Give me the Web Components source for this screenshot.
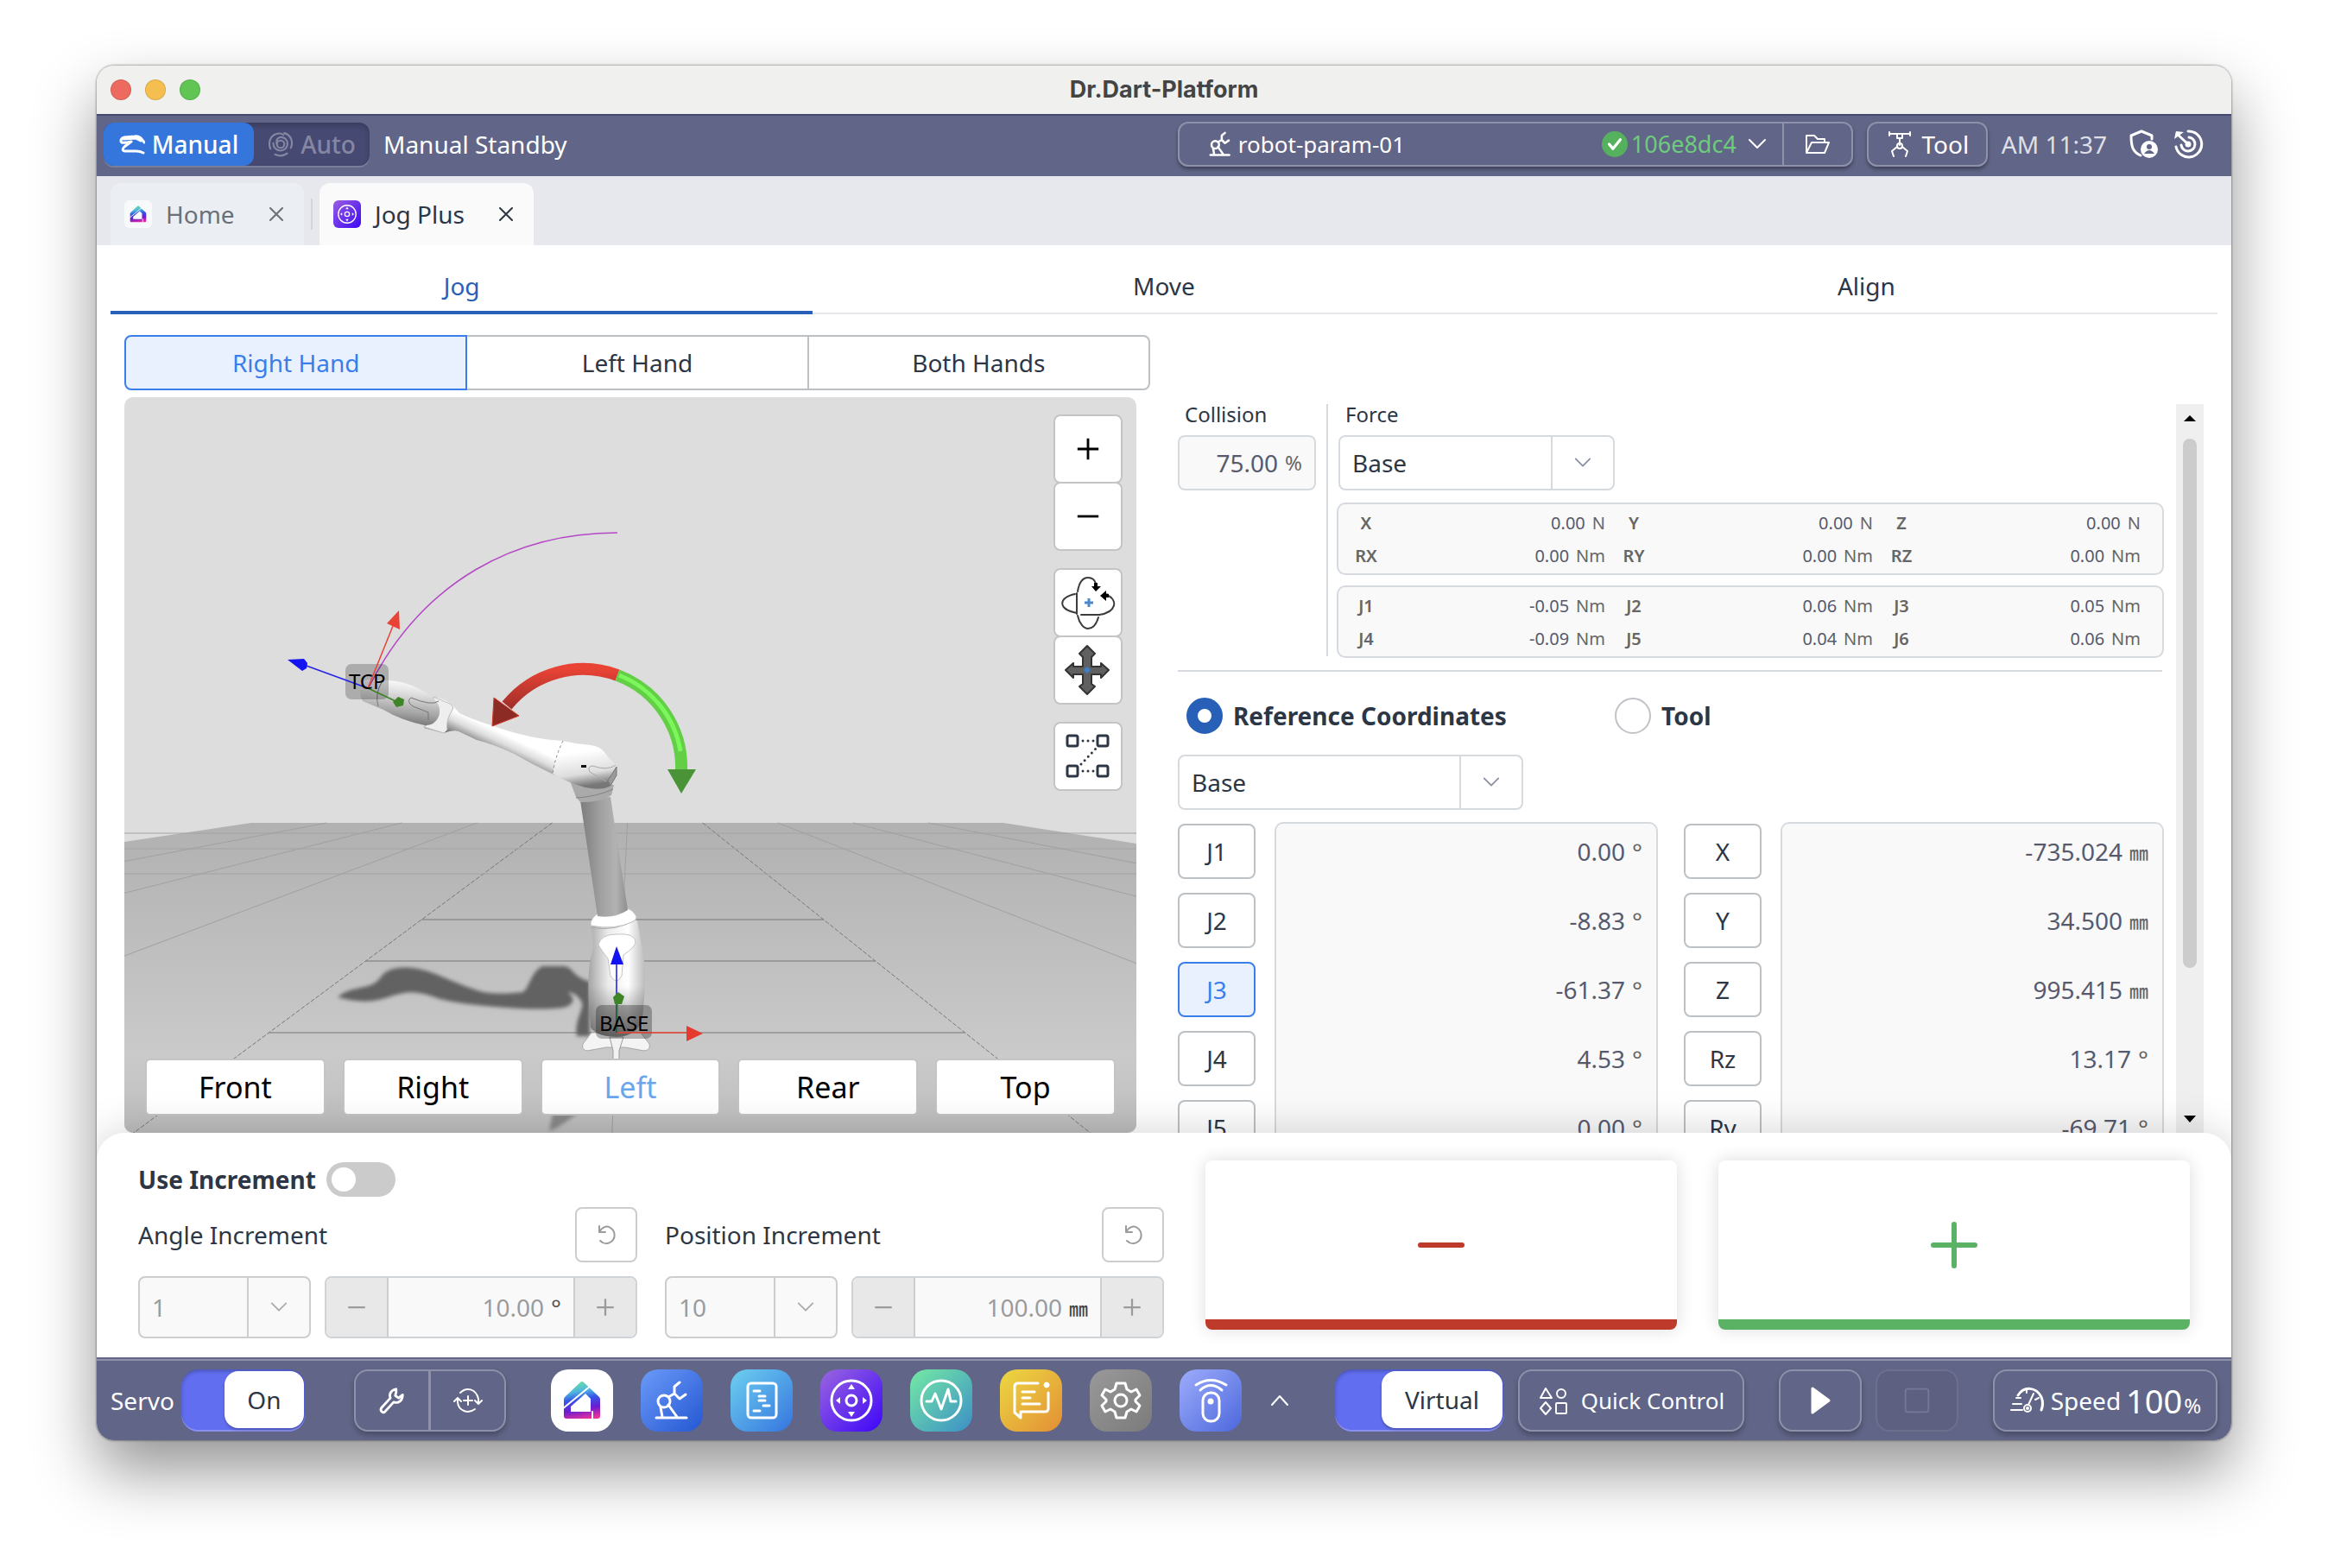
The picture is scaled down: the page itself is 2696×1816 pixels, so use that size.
<!DOCTYPE html>
<html lang="en">
<head>
<meta charset="utf-8">
<title>Dr.Dart-Platform</title>
<style>
  :root {
    --bar: #616587;
    --line: #d6dade;
    --ink: #2d3644;
    --blue: #2860b8;
    --bright: #3a7eea;
    --field: #f9f9f9;
    --glass: #8f91ab;
  }

  body {
    box-sizing: border-box;
    height: 100vh;
    margin: 0;
    padding: 76px 112px 148px;
    background: #fff;
    color: var(--ink);
    font: 28px/40px "Noto Sans", "Noto Sans CJK KR", sans-serif;
    overflow: hidden;
  }
</style>
</head>
<body>
<dart-window>
  <title-bar slot="top">Dr.Dart-Platform</title-bar>
  <status-bar slot="top"></status-bar>
  <module-tabs slot="top"></module-tabs>
  <jog-nav></jog-nav>
  <jog-workspace>
    <hand-switch slot="left"></hand-switch>
    <robot-view slot="left"></robot-view>
    <jog-panel slot="right"></jog-panel>
  </jog-workspace>
  <jog-sheet></jog-sheet>
  <dock-bar></dock-bar>
</dart-window>

<script>
const ROBOT = `
  <path d="M18 56h35M23 44l2 11M32 41l10 14M32 32l7-4v-8l6-5M39 28l6 6 7-5"/>
  <circle cx="27" cy="37" r="7"/>
`;
const JOG = `
  <circle cx="36" cy="36" r="23"/>
  <circle cx="36" cy="36" r="6"/>
  <path fill="currentColor" stroke="none" d="m36 17 4 6h-8zm0 38 4-6h-8zM18 36l5-4v8zm36 0-5-4v8z"/>
`;
const HOUSE = `
  <defs><linearGradient id="g" gradientUnits="userSpaceOnUse" x1="32" y1="14" x2="40" y2="58">
    <stop offset="0" stop-color="#66dfa9"/><stop offset=".25" stop-color="#4fb6dd"/>
    <stop offset=".45" stop-color="#3557ea"/><stop offset=".72" stop-color="#6a1ccf"/>
    <stop offset="1" stop-color="#f0319b"/></linearGradient></defs>
  <path fill="url(#g)" stroke="none" fill-rule="evenodd" d="M34 15q2-2 4 0l18 17q1 1 1 3v19q0 3-3 3H18q-3 0-3-3V35q0-2 1-3zM40 28 23 43v6h23V34z"/>
  <path stroke="#fff" stroke-width="2" d="M46 19 13 46M48 49v10"/>
`;

const ICONS = {
  robot: { box: "15 12 42 48", width: 4, body: ROBOT },
  robotApp: { box: "0 0 72 72", width: 3, body: ROBOT },
  jog: { box: "0 0 72 72", width: 3, body: JOG },
  house: { box: "0 0 72 72", width: 2, body: HOUSE },
  script: { box: "0 0 72 72", width: 3, body: `<rect x="20" y="16" width="33" height="40" rx="4"/><path d="M27 25h7M33 31h7M33 36h7M38 42h7M27 48h7"/>` },
  monitor: { box: "0 0 72 72", width: 3, body: `<circle cx="36" cy="36" r="23"/><path d="M19 37h6l4-9 7 18 8-23 3 14h6"/>` },
  log: { box: "0 0 72 72", width: 3, body: `<path d="M44 16H21q-4 0-4 4v30l7 6v-7h28q4 0 4-4V27"/><circle cx="54" cy="18" r="3" fill="currentColor" stroke-width="1"/><path d="M26 26h14M26 33h9M26 40h20"/>` },
  gear: { box: "0 0 72 72", width: 3, body: `<path d="M31 16h10l2 7 5 3 6-3 4 7-5 5v2l5 5-4 7-6-3-5 3-2 7H31l-2-7-5-3-6 3-4-7 5-5v-2l-5-5 4-7 6 3 5-3z"/><circle cx="36" cy="36" r="7"/>` },
  remote: { box: "0 0 72 72", width: 3, body: `<rect x="27" y="27" width="19" height="33" rx="9"/><circle cx="36" cy="37" r="2" fill="currentColor"/><path d="M24 24q12-11 25 0M19 18q17-11 35 0"/>` },
  hand: { box: "0 0 30 22", width: 3, body: `<path d="M29 9C26 4 23 1 18 2L6 3C2 4 1 7 3 9c3 1 7 0 11-1M5 5l14-1 6 3M14 8 6 14c-3 3-2 5 1 5h13c4 0 6 1 8 2"/>` },
  auto: { box: "0 0 28 28", width: 2, body: `<circle cx="14" cy="14" r="4"/><path d="M10 14C8 6 15 5 19 8c4 4 3 12-5 13-5 0-8-4-8-8M18 2c7 2 10 9 7 16M21 24c-4 3-9 3-13 1M3 19C0 12 3 5 9 3c3-1 6-1 8 1"/>` },
  check: { box: "0 0 28 28", width: 3, body: `<circle cx="14" cy="14" r="14" fill="#56b15f" stroke="none"/><path stroke="#fff" d="m8 14 4 5 8-10"/>` },
  chevron: { box: "0 0 24 24", width: 2, body: `<path d="m3 7 9 9 9-9"/>` },
  up: { box: "0 0 24 24", width: 2, body: `<path d="m3 17 9-10 9 10"/>` },
  folder: { box: "0 0 32 28", width: 2, body: `<path d="M3 24V4h9l4 4h8v4M3 24l6-12h20l-5 12z"/>` },
  gripper: { box: "0 0 28 32", width: 2, body: `<path d="M2 4h24M2 2v4M26 2v4M11 4v5h6V4M14 9v8"/><circle cx="14" cy="18" r="3"/><path d="m11 19-6 5 2 6M17 19l6 5-2 6"/>` },
  shield: { box: "0 0 36 36", width: 3, body: `<path d="M15 31C6 27 4 21 4 8l12-5 12 5v4"/><circle cx="25" cy="24" r="10" fill="currentColor" stroke="none"/><circle cx="25" cy="21" r="3" fill="#616587" stroke="none"/><path stroke="none" fill="#616587" d="M19 29q6-8 12 0z"/>` },
  power: { box: "0 0 36 36", width: 3, body: `<path d="M18 3a15 15 0 1 1-14 18M19 10a8 8 0 1 1-9 9"/><path d="m5 6 13 12"/><path fill="currentColor" stroke="none" d="m2 12 2-9 9 1z"/><circle cx="18" cy="18" r="2" fill="currentColor"/>` },
  close: { box: "0 0 20 20", width: 2, body: `<path d="m3 3 14 14M17 3 3 17"/>` },
  plus: { box: "0 0 32 32", width: 3, body: `<path stroke-linecap="butt" d="M3 16h26M16 3v26"/>` },
  minus: { box: "0 0 32 32", width: 3, body: `<path stroke-linecap="butt" d="M3 16h26"/>` },
  bigPlus: { box: "0 0 60 60", width: 6, body: `<path d="M6 30h48M30 6v48"/>` },
  bigMinus: { box: "0 0 60 60", width: 6, body: `<path d="M6 30h48"/>` },
  undo: { box: "0 0 28 28", width: 2, body: `<path d="M6 4v7h7M6 11C9 5 15 3 19 6c6 4 6 12 1 16-4 3-9 3-13-1"/>` },
  wrench: { box: "0 0 36 36", width: 3, body: `<path d="M23 4c-6 1-9 6-7 11L5 27c-2 3 1 7 4 5l11-12c6 2 11-2 11-9l-5 4-4-3 1-4z"/>` },
  recover: { box: "0 0 36 36", width: 2, body: `<path d="M9 9c7-7 18-5 21 7v6M30 22l-4-4M30 22l4-4M26 28C18 34 7 30 6 20v-5M6 15l-4 4M6 15l4 4M18 13v10M13 18h10"/>` },
  shapes: { box: "0 0 36 36", width: 2, body: `<path d="m9 4 7 11H3zM9 20l6 7-6 7-6-7z"/><circle cx="27" cy="10" r="5"/><rect x="21" y="21" width="12" height="12" rx="1"/>` },
  play: { box: "0 0 36 36", width: 3, body: `<path fill="currentColor" d="M9 4 28 18 9 32z"/>` },
  stop: { box: "0 0 36 36", width: 2, body: `<rect x="3" y="3" width="30" height="30" rx="3"/>` },
  gauge: { box: "0 0 42 32", width: 2, body: `<path stroke-width="3" d="M10 10C17-1 31 0 37 12c2 5 2 10 0 15"/><path d="M20 2v5M34 13l-4 2M22 21l6-13M8 13h5M4 20h10M2 27h13"/><circle cx="21" cy="25" r="4"/><circle cx="21" cy="25" r="1"/>` },
  orbit: { box: "0 0 64 64", width: 2, body: `
    <g stroke="#3c3c3c"><path d="M19 21v24M24 46h21"/>
    <path d="M20 19C22 7 27 3 32 3c5 0 8 3 9 7M20 47c2 9 7 15 12 15 6 0 10-6 12-13M17 22C-3 26-3 40 19 44M45 46c20-3 22-17 9-23"/></g>
    <path fill="#000" stroke="none" d="M36 13h11l-6 6zM39 9h4v5h-4zM46 24l7-6v12zM52 21l4 1v4h-4z"/>
    <path stroke="#4b89cc" stroke-linecap="butt" stroke-width="3" d="M28 32h10M33 27v10"/>` },
  pan: { box: "0 0 64 64", width: 2, body: `
    <path fill="#606060" stroke="#333" d="m31 4 9 9-4 4v11h11v-4l9 8-9 9v-4H36v11l4 3-9 9-9-9 4-3V37H15v4l-9-9 9-8v4h11V17l-4-4z"/>
    <path fill="#3f7fca" stroke="none" d="m31 28 4 4-4 4-4-4z"/>` },
  path: { box: "0 0 56 56", width: 3, body: `
    <rect x="4" y="4" width="12" height="12" rx="2"/><rect x="39" y="4" width="12" height="12" rx="2"/>
    <rect x="4" y="39" width="12" height="12" rx="2"/><rect x="39" y="39" width="12" height="12" rx="2"/>
    <path stroke-dasharray="0 6" d="M22 10h14M22 45h14M20 37l18-19"/>` },
};

// Small base class: every element renders its own styles and markup once.
class DartElement extends HTMLElement {
  connectedCallback() {
    if (this.shadowRoot) return;
    this.attachShadow({ mode: "open" });
    this.shadowRoot.innerHTML = `<style>
      :host { display: block; box-sizing: border-box; }
      *, *::before, *::after { box-sizing: border-box; }
      button, input, select { font: inherit; color: inherit; margin: 0; }
      button { padding: 0; cursor: pointer; }
      ${this.styles()}
    </style>${this.render()}`;
  }

  styles() { return ""; }
  render() { return "<slot></slot>"; }
}

function icon(name, size) {
  return `<ui-icon name="${name}" style="--size: ${size}px"></ui-icon>`;
}

class UiIcon extends DartElement {
  styles() {
    return `
      :host { display: inline-block; width: var(--size, 28px); height: var(--size, 28px); flex: none; }
      svg { display: block; width: 100%; height: 100%; }
    `;
  }
  render() {
    const item = ICONS[this.getAttribute("name")];
    return `<svg viewBox="${item.box}" fill="none" stroke="currentColor" stroke-width="${item.width}"
      stroke-linecap="round" stroke-linejoin="round" aria-hidden="true">${item.body}</svg>`;
  }
}

class DartWindow extends DartElement {
  styles() {
    return `
      :host {
        display: flex;
        flex-direction: column;
        height: 100%;
        border-radius: 20px;
        background: #fff;
        box-shadow: 0 0 2px 1px rgba(0, 0, 0, .3), 0 36px 72px rgba(0, 0, 0, .42);
        overflow: hidden;
      }
    `;
  }
  render() { return `<slot name="top"></slot><slot></slot>`; }
}

class TitleBar extends DartElement {
  styles() {
    return `
      :host {
        display: grid;
        grid-template-columns: 1fr auto 1fr;
        align-items: center;
        flex: none;
        height: 56px;
        padding: 0 16px;
        background: #f0f0ee;
        color: #444;
        font-family: Inter, sans-serif;
        font-size: 27px;
        font-weight: 700;
      }
      .lights { display: flex; gap: 16px; }
      i { width: 24px; height: 24px; border-radius: 50%; background: var(--c); border: 1px solid rgba(0, 0, 0, .12); }
    `;
  }
  render() {
    return `<div class="lights"><i style="--c:#ed6a5e"></i><i style="--c:#f5bf4f"></i><i style="--c:#61c554"></i></div>
      <span><slot></slot></span>`;
  }
}

class StatusBar extends DartElement {
  styles() {
    return `
      :host {
        display: flex;
        justify-content: space-between;
        flex: none;
        height: 72px;
        padding: 8px 32px 12px 8px;
        border-top: 2px solid #454870;
        background: var(--bar);
        color: #fff;
      }
      div { display: flex; align-items: center; }
      .mode {
        height: 50px;
        border-radius: 12px;
        background: #464971;
        box-shadow: 0 2px 0 #7b7e9b, inset 0 3px 6px rgba(0, 0, 0, .2);
      }
      .mode button {
        display: flex;
        align-items: center;
        justify-content: center;
        gap: 8px;
        height: 50px;
        border: 0;
        border-radius: 12px;
        background: none;
        color: #8587a2;
        font-weight: 500;
      }
      .mode .on { width: 174px; background: #3576dd; color: #fff; }
      .mode button + button { width: 134px; }
      .state { margin-left: 16px; }
      .right { gap: 16px; }
      .glass {
        height: 52px;
        border: 2px solid var(--glass);
        border-radius: 12px;
        background: none;
        color: #fff;
        box-shadow: 0 3px 4px rgba(0, 0, 0, .35);
      }
      .param { width: 782px; }
      .param button { border: 0; background: none; color: #fff; height: 48px; display: flex; align-items: center; }
      .pick { flex: 1; padding: 0 17px 0 32px; gap: 6px; font-size: 26px; }
      .pick .hash { display: flex; align-items: center; gap: 4px; margin-left: auto; margin-right: 6px; color: #6dcc7c; font-size: 27px; }
      .param .folder { width: 80px; justify-content: center; border-left: 2px solid var(--glass); }
      .tool { display: flex; align-items: center; justify-content: center; width: 140px; gap: 10px; }
      time { color: #dfe0e7; }
      .end { gap: 16px; margin-left: 8px; }
      .end button { display: flex; border: 0; background: none; color: #fff; }
    `;
  }
  render() {
    return `
      <div>
        <div class="mode">
          <button type="button" class="on" aria-pressed="true">${icon("hand", 30)}Manual</button>
          <button type="button" aria-pressed="false">${icon("auto", 30)}Auto</button>
        </div>
        <span class="state">Manual Standby</span>
      </div>
      <div class="right">
        <div class="glass param">
          <button type="button" class="pick">${icon("robot", 30)}<span>robot-param-01</span>
            <span class="hash">${icon("check", 30)}106e8dc4</span>${icon("chevron", 24)}</button>
          <button type="button" class="folder" aria-label="Open parameters">${icon("folder", 32)}</button>
        </div>
        <button type="button" class="glass tool">${icon("gripper", 32)}Tool</button>
        <time>AM 11:37</time>
        <div class="end">
          <button type="button" aria-label="Safety">${icon("shield", 36)}</button>
          <button type="button" aria-label="Power">${icon("power", 36)}</button>
        </div>
      </div>
    `;
  }
}

class ModuleTabs extends DartElement {
  styles() {
    return `
      :host {
        display: flex;
        align-items: flex-end;
        flex: none;
        height: 80px;
        padding: 0 16px;
        background: #e7e8ed;
      }
      .tab {
        display: flex;
        align-items: center;
        gap: 16px;
        width: 224px;
        height: 72px;
        padding: 0 22px 0 16px;
        border-radius: 12px 12px 0 0;
        background: #ebeef3;
        color: #6b7078;
      }
      .tab.on { width: 248px; background: #fafafa; color: var(--ink); }
      .logo { display: flex; flex: none; border-radius: 6px; background: #f8f9fb; color: #fff; }
      .on .logo { background: linear-gradient(135deg, #9a5fe0, #3d06f5); }
      a { flex: 1; color: inherit; text-decoration: none; white-space: nowrap; }
      button { display: flex; border: 0; background: none; }
      hr { width: 2px; height: 36px; margin: 0 8px 18px; border: 0; background: #d3d5da; }
    `;
  }
  render() {
    return `
      <div class="tab"><span class="logo">${icon("house", 32)}</span><a href="#home">Home</a>
        <button type="button" aria-label="Close Home">${icon("close", 20)}</button></div>
      <hr>
      <div class="tab on"><span class="logo">${icon("jog", 32)}</span><a href="#jog-plus">Jog Plus</a>
        <button type="button" aria-label="Close Jog Plus">${icon("close", 20)}</button></div>
    `;
  }
}

class JogNav extends DartElement {
  styles() {
    return `
      :host { display: flex; flex: none; height: 80px; margin: 0 16px; border-bottom: 2px solid #e6e7ed; }
      button { flex: 1; height: 80px; padding-top: 18px; border: 0; border-bottom: 4px solid transparent; background: none; }
      .on { border-color: var(--blue); color: var(--blue); }
    `;
  }
  render() {
    return `<button type="button" class="on">Jog</button><button type="button">Move</button><button type="button">Align</button>`;
  }
}

class JogWorkspace extends DartElement {
  styles() {
    return `
      :host {
        display: grid;
        grid-template-columns: 1fr 1fr;
        gap: 32px;
        flex: 1;
        min-height: 0;
        padding: 24px 32px 0;
      }
      div { display: flex; flex-direction: column; gap: 8px; min-width: 0; min-height: 0; }
      .right { padding-top: 72px; }
    `;
  }
  render() { return `<div><slot name="left"></slot></div><div class="right"><slot name="right"></slot></div>`; }
}

class HandSwitch extends DartElement {
  styles() {
    return `
      :host { display: flex; flex: none; height: 64px; }
      button { flex: 1; border: 2px solid #bcc1c6; border-left-width: 0; background: #fff; }
      button:first-child { border-radius: 8px 0 0 8px; }
      button:last-child { border-radius: 0 8px 8px 0; }
      button.on { border: 2px solid var(--bright); border-radius: 8px 0 0 8px; background: #eaf1fe; color: var(--bright); }
    `;
  }
  render() {
    return `<button type="button" class="on">Right Hand</button><button type="button">Left Hand</button><button type="button">Both Hands</button>`;
  }
}

class RobotView extends DartElement {
  styles() {
    return `
      :host {
        display: flex;
        flex-direction: column;
        justify-content: space-between;
        align-items: flex-end;
        position: relative;
        flex: 1;
        min-height: 0;
        margin-right: 16px;
        padding: 20px 16px;
        border-radius: 10px;
        background: #ddd;
        overflow: hidden;
      }
      svg { position: absolute; inset: 0; width: 100%; height: 100%; }
      .tools, .views { position: relative; display: flex; }
      .tools { flex-direction: column; gap: 20px; }
      .tools div { display: flex; flex-direction: column; }
      .tools button {
        display: grid;
        place-items: center;
        width: 80px;
        height: 80px;
        border: 2px solid #c4c4c4;
        border-radius: 8px;
        background: #fff;
        color: #000;
      }
      .tools button + button { margin-top: -2px; }
      .views { align-self: stretch; gap: 20px; padding: 0 8px; }
      .views button {
        flex: 1;
        height: 66px;
        border: 2px solid #c4c4c4;
        border-radius: 6px;
        background: #fff;
        color: #000;
        font-size: 34px;
      }
      .views button.on { color: #6ba6ec; }
    `;
  }

  // Floor lines share one vanishing point above the horizon.
  floor() {
    let lines = "";
    for (let k = -4; k <= 4; k++) {
      const slope = 1.3 * k - 0.05;
      const inner = Math.abs(k) === 1;
      lines += `<path stroke="${inner ? "#777" : "#a0a0a0"}" ${inner ? `stroke-dasharray="5 2"` : ""}
        d="M${730 + slope * 67} 953 L${730 + slope * 434} 1320"/>`;
    }
    for (const y of [965, 983, 1012]) lines += `<path stroke="#a2a2a2" d="M144 ${y}H1316"/>`;
    for (const y of [1065, 1113, 1196]) {
      lines += `<path stroke="#777" d="M${730 - 1.35 * (y - 886)} ${y}H${730 + 1.25 * (y - 886)}"/>`;
    }
    return lines;
  }

  render() {
    return `
      <svg viewBox="144 460 1172 852" preserveAspectRatio="xMidYMid slice" role="img" aria-label="Robot arm">
        <defs>
          <linearGradient id="ground" x2="0" y2="1"><stop stop-color="#b1b1b1"/><stop offset=".75" stop-color="#cacaca"/><stop offset="1" stop-color="#bdbdbd"/></linearGradient>
          <linearGradient id="link" gradientUnits="userSpaceOnUse" x1="600" y1="846" x2="585" y2="878"><stop offset=".3" stop-color="#fff"/><stop offset=".6" stop-color="#ddd"/><stop offset="1" stop-color="#777"/></linearGradient>
          <linearGradient id="elbow" x2="0.2" y2="1"><stop offset=".3" stop-color="#fff"/><stop offset=".75" stop-color="#ddd"/><stop offset="1" stop-color="#777"/></linearGradient>
          <linearGradient id="wrist" x1=".6" y1="0" x2=".4" y2="1"><stop stop-color="#fff"/><stop offset=".3" stop-color="#ddd"/><stop offset=".7" stop-color="#a4a4a4"/><stop offset="1" stop-color="#6c6c6c"/></linearGradient>
          <linearGradient id="column"><stop stop-color="#7c7c7c"/><stop offset=".45" stop-color="#a2a2a2"/><stop offset=".75" stop-color="#b2b2b2"/><stop offset="1" stop-color="#8e8e8e"/></linearGradient>
          <linearGradient id="base"><stop stop-color="#a5a5a5"/><stop offset=".35" stop-color="#ececec"/><stop offset=".7" stop-color="#fff"/><stop offset="1" stop-color="#bbb"/></linearGradient>
          <linearGradient id="dim" x2="0" y2="1"><stop offset=".35" stop-color="#555" stop-opacity="0"/><stop offset="1" stop-color="#555" stop-opacity=".7"/></linearGradient>
          <linearGradient id="red" x2="0" y2="1"><stop stop-color="#e84335"/><stop offset="1" stop-color="#a5302a"/></linearGradient>
          <filter id="soft"><feGaussianBlur stdDeviation="2"/></filter>
        </defs>
        <path fill="url(#ground)" d="M291 953H1162L1316 977V1312H144V975z"/>
        <g fill="none">${this.floor()}</g>

        <g filter="url(#soft)" fill="#626262">
          <path d="M391 1155C408 1140 428 1148 440 1133C448 1120 466 1119 484 1122C506 1126 530 1141 560 1149C578 1152 594 1150 606 1149C614 1142 614 1127 628 1119H654C664 1121 663 1131 683 1137V1200H668C664 1180 680 1166 672 1158C666 1148 656 1149 658 1150C670 1158 660 1166 652 1167C630 1170 600 1168 586 1167C550 1164 520 1162 498 1153C470 1144 460 1153 438 1158C420 1162 404 1158 391 1155z"/>
          <path fill="#888" d="M640 1290h30c-10 4-18 14-34 20z"/>
        </g>

        <!-- base -->
        <path fill="#f4f4f4" stroke="#a8a8a8" d="M685 1196L675 1209Q673 1216 680 1217L702 1213H724L746 1217Q754 1216 752 1209L742 1196z"/>
        <path fill="url(#base)" d="M685 1068C686 1086 688 1096 686 1102C681 1116 681 1140 682 1160L684 1190Q690 1200 714 1201Q740 1200 744 1178C747 1150 749 1120 744 1100L738 1066z"/>
        <path fill="url(#dim)" d="M682 1110C681 1140 682 1160 684 1190Q690 1200 714 1201Q740 1200 744 1178C747 1150 748 1120 746 1110z"/>
        <path fill="none" stroke="#aaa" d="M684 1074Q712 1080 738 1064"/>
        <path fill="#fff" stroke="#c4c4c4" d="M693 1094Q696 1082 714 1082Q736 1080 736 1092Q734 1098 722 1106L720 1130Q714 1142 707 1130L704 1110Q696 1100 693 1094z"/>
        <path fill="#fff" stroke="#bbb" d="M684 1068Q686 1062 692 1058L727 1052Q733 1054 737 1061Q738 1064 734 1067Q712 1078 684 1072z"/>
        <path fill="#f2f2f2" stroke="#999" d="M706 1201h16l-5 16v12h-7v-12z"/>

        <!-- lower link -->
        <path fill="url(#column)" d="M672 927L707 923L727 1054Q712 1064 692 1061z"/>
        <path fill="#aaa" d="M660 904L667 923L672 929Q694 930 708 921L711 909z"/>
        <path fill="none" stroke="#828282" d="M667 924Q690 923 710 914"/>

        <!-- upper link, elbow and wrist -->
        <path fill="url(#link)" d="M506 808Q520 812 525 818L532 826Q546 833 569 840Q613 856 652 858L643 898Q618 886 595 873Q572 862 552 857L531 847Q524 845 514 849L491 843z"/>
        <path fill="url(#elbow)" d="M652 858Q668 862 684 863Q694 864 700 871Q704 878 714 886Q716 896 706 911Q695 916 678 912Q656 906 640 896Q643 876 652 858z"/>
        <path fill="none" stroke="#888" stroke-dasharray="3 3" d="M652 858Q643 876 640 896"/>
        <path fill="none" stroke="#aaa" d="M713 886Q704 893 686 887Q680 888 683 894L702 905"/>
        <path fill="#9a9a9a" stroke="#777" d="M714 888L714 898L707 910L704 904z"/>
        <path fill="#111" d="M673 886h6v3h-6z"/>
        <path fill="#eee" stroke="#bbb" d="M502 807L521 815Q526 818 524 822Q516 834 518 845L514 849L491 842Q506 834 502 807z"/>
        <path fill="url(#wrist)" d="M417 790L426 787L450 788Q480 790 502 809Q512 818 508 830Q504 840 492 840Q464 834 444 822L420 812Q416 806 417 790z"/>
        <path fill="none" stroke="#777" d="M442 790Q434 804 438 818M508 812Q500 818 476 808Q470 812 478 818L496 825V834"/>

        <!-- rotation handle -->
        <g fill="none" stroke-width="14">
          <path stroke="url(#red)" d="M587 817A114 114 0 0 1 715 782"/>
          <path stroke="#62cf47" d="M715 782A114 114 0 0 1 789 893"/>
          <path stroke="#7bf65b" stroke-width="5" d="M717 782A115 115 0 0 1 788 870"/>
        </g>
        <path fill="#8c2b23" stroke="#d23b2f" d="M570 841L572 808L601 829z"/>
        <path fill="#4b9337" d="M773 891H806L789 919z"/>

        <!-- tool frame -->
        <path fill="none" stroke="#b548c6" stroke-width="1.5" d="M715 617C600 617 490 670 426 798"/>
        <rect x="400" y="769" width="50" height="41" rx="7" fill="#000" fill-opacity=".22"/>
        <g fill="none" stroke-width="1.5"><path stroke="#e94335" d="M426 797L455 725"/><path stroke="#2222e8" d="M426 797L352 770"/><path stroke="#3a8424" d="M426 797L458 812"/></g>
        <path fill="#e94335" d="M462 707L448 722L463 729z"/>
        <path fill="#1414f0" d="M333 764L352 763L356 768L355 774L350 777z"/>
        <path fill="#3d8526" d="M461 807L468 810L467 817L459 819L455 813z"/>
        <text x="404" y="798" font-size="24">TCP</text>

        <!-- base frame -->
        <rect x="690" y="1164" width="65" height="39" rx="7" fill="#000" fill-opacity=".28"/>
        <g fill="none" stroke-width="1.5"><path stroke="#e94335" d="M714 1196H796"/><path stroke="#1414f0" d="M714 1196V1115"/><path stroke="#3d8526" d="M715 1196V1160"/></g>
        <path fill="#e63a2e" d="M795 1188V1206L814 1197z"/>
        <path fill="#1414f0" d="M714 1096L707 1117H722z"/>
        <path fill="#3d8526" d="M716 1149L723 1154L720 1163H712L710 1155z"/>
        <text x="694" y="1194" font-size="24">BASE</text>
      </svg>
      <div class="tools">
        <div><button type="button" aria-label="Zoom in">${icon("plus", 30)}</button><button type="button" aria-label="Zoom out">${icon("minus", 30)}</button></div>
        <div><button type="button" aria-label="Orbit">${icon("orbit", 64)}</button><button type="button" aria-label="Pan">${icon("pan", 64)}</button></div>
        <div><button type="button" aria-label="Path" style="color: var(--ink)">${icon("path", 56)}</button></div>
      </div>
      <div class="views">
        <button type="button">Front</button><button type="button">Right</button><button type="button" class="on">Left</button><button type="button">Rear</button><button type="button">Top</button>
      </div>
    `;
  }
}

class DartSelect extends DartElement {
  styles() {
    return `
      :host { display: grid; grid-template-columns: 1fr 72px; height: 64px; border: 2px solid var(--line); border-radius: 8px; background: #fff; overflow: hidden; }
      :host([disabled]) { height: 72px; border-color: #cbcdcf; background: var(--field); color: #9b9b9b; }
      select {
        grid-area: 1 / 1 / 2 / 3;
        width: 100%;
        height: 100%;
        padding: 0 0 0 14px;
        border: 0;
        background: none;
        appearance: none;
        opacity: 1;
      }
      span {
        grid-area: 1 / 2;
        display: grid;
        place-items: center;
        border-left: 2px solid var(--line);
        color: #8a8fa3;
        pointer-events: none;
      }
      :host([disabled]) span { border-color: #cbcdcf; color: #aaa; }
    `;
  }
  render() {
    const off = this.hasAttribute("disabled") ? "disabled" : "";
    return `<select aria-label="${this.getAttribute("label")}" ${off}><option>${this.getAttribute("value")}</option></select>
      <span>${icon("chevron", 22)}</span>`;
  }
}

class ForceTable extends DartElement {
  styles() {
    return `
      :host { height: 84px; padding: 3px 12px; border: 2px solid var(--line); border-radius: 10px; background: var(--field); font-size: 20px; }
      dl { display: grid; grid-template-columns: repeat(3, 1fr); margin: 0; line-height: 38px; color: #666; }
      div { display: flex; }
      dt { width: 40px; text-align: center; font-weight: 600; }
      dd { display: flex; flex: 1; justify-content: flex-end; gap: 8px; margin: 0; padding-right: 13px; }
      b { color: #565a6c; font-weight: 400; }
    `;
  }
  render() {
    const cells = this.getAttribute("rows").split(";").map((row) => row.trim().split(" "));
    return `<dl>${cells.map(([name, value, unit]) => `<div><dt>${name}</dt><dd><b>${value}</b><span>${unit}</span></dd></div>`).join("")}</dl>`;
  }
}

class AxisGroup extends DartElement {
  styles() {
    return `
      :host { display: grid; grid-template-columns: 90px 1fr; gap: 22px; align-items: start; }
      .names, .values { display: flex; flex-direction: column; gap: 16px; }
      .names { padding-top: 2px; }
      button { height: 64px; border: 2px solid #bcc1c6; border-radius: 8px; background: #fff; }
      button.on { border-color: var(--bright); background: #eaf1fe; color: var(--bright); }
      .values { padding: 0 16px 16px; border: 2px solid var(--line); border-radius: 10px; background: var(--field); color: #565a6c; }
      output { display: flex; justify-content: flex-end; align-items: center; gap: 8px; height: 64px; }
      small { font-size: 28px; color: #666; }
      .mm { font: 500 22px/24px "Noto Sans CJK KR", sans-serif; }
    `;
  }
  render() {
    const rows = this.getAttribute("rows").split(";").map((row) => row.trim().split(" "));
    const active = this.getAttribute("active");
    return `
      <div class="names">${rows.map(([name]) => `<button type="button" class="${name === active ? "on" : ""}">${name}</button>`).join("")}</div>
      <div class="values">${rows.map(([, value, unit]) => `<output>${value}<small class="${unit === "㎜" ? "mm" : ""}">${unit}</small></output>`).join("")}</div>
    `;
  }
}

class JogPanel extends DartElement {
  styles() {
    return `
      :host { display: flex; gap: 14px; min-height: 0; flex: 1; padding-top: 8px; overflow: hidden; }
      .content { flex: 1; min-width: 0; }
      .status { display: flex; padding-bottom: 14px; border-bottom: 2px solid var(--line); margin-right: 2px; }
      .caption { display: block; padding-left: 8px; margin-bottom: 12px; font-size: 24px; line-height: 24px; }
      .collision { width: 160px; }
      .collision div {
        display: flex;
        align-items: center;
        gap: 8px;
        height: 64px;
        padding: 0 14px;
        border: 2px solid var(--line);
        border-radius: 8px;
        background: var(--field);
        color: #565a6c;
      }
      input[type=text] { width: 0; flex: 1; padding: 0; border: 0; background: none; text-align: right; }
      .collision span { font-size: 24px; color: #666; }
      .rule { width: 2px; margin: 0 10px 2px 12px; background: var(--line); }
      .force { flex: 1; margin-right: -2px; }
      .force dart-select { width: 320px; margin: 0 0 14px 2px; }
      .force .caption { padding-left: 10px; }
      force-table + force-table { margin-top: 12px; }
      .refs { display: flex; height: 42px; margin: 30px 12px 24px 10px; font-weight: 700; }
      .refs label { display: flex; align-items: center; gap: 12px; flex: 0 0 496px; }
      .refs label + label { flex-basis: auto; }
      input[type=radio] { appearance: none; width: 42px; height: 42px; border: 2px solid #c1c1c8; border-radius: 50%; background: #fff; }
      input[type=radio]:checked { border: 13px solid var(--blue); }
      .frame { width: 400px; }
      .axes { display: grid; grid-template-columns: 1fr 1fr; gap: 30px; margin-top: 14px; }
      .bar { display: flex; flex-direction: column; align-items: center; width: 32px; background: #efefef; }
      .bar i { width: 0; margin: 13px 0 20px; border: 7px solid transparent; border-top: 0; border-bottom: 7px solid #000; }
      .bar b { width: 16px; flex: 0 0 613px; border-radius: 8px; background: #ccc; }
      .bar i:last-child { margin: auto 0 12px; border-top: 8px solid #000; border-bottom: 0; }
    `;
  }
  render() {
    return `
      <div class="content">
        <div class="status">
          <div class="collision">
            <label class="caption" for="collision">Collision</label>
            <div><input type="text" id="collision" value="75.00" readonly><span>%</span></div>
          </div>
          <div class="rule"></div>
          <div class="force">
            <span class="caption">Force</span>
            <dart-select label="Force" value="Base"></dart-select>
            <force-table rows="X 0.00 N;Y 0.00 N;Z 0.00 N;RX 0.00 Nm;RY 0.00 Nm;RZ 0.00 Nm"></force-table>
            <force-table rows="J1 -0.05 Nm;J2 0.06 Nm;J3 0.05 Nm;J4 -0.09 Nm;J5 0.04 Nm;J6 0.06 Nm"></force-table>
          </div>
        </div>
        <div class="refs">
          <label><input type="radio" name="ref" checked>Reference Coordinates</label>
          <label><input type="radio" name="ref">Tool</label>
        </div>
        <dart-select class="frame" label="Reference frame" value="Base"></dart-select>
        <div class="axes">
          <axis-group active="J3" rows="J1 0.00 °;J2 -8.83 °;J3 -61.37 °;J4 4.53 °;J5 0.00 °"></axis-group>
          <axis-group rows="X -735.024 ㎜;Y 34.500 ㎜;Z 995.415 ㎜;Rz 13.17 °;Ry -69.71 °"></axis-group>
        </div>
      </div>
      <div class="bar" aria-hidden="true"><i></i><b></b><i></i></div>
    `;
  }
}

class IncrementField extends DartElement {
  styles() {
    return `
      .head { display: flex; justify-content: space-between; align-items: center; margin-bottom: 16px; }
      .reset { display: grid; place-items: center; width: 72px; height: 64px; border: 2px solid #cbcdcf; border-radius: 8px; background: #fff; color: #9b9b9b; }
      .row { display: grid; grid-template-columns: 200px 1fr; gap: 16px; }
      .stepper { display: grid; grid-template-columns: 70px 1fr 70px; height: 72px; border: 2px solid #cfd3d8; border-radius: 8px; background: var(--field); overflow: hidden; }
      .stepper button { display: grid; place-items: center; border: 0; background: #e8e8e8; color: #9b9b9b; }
      .value { display: flex; align-items: center; gap: 8px; min-width: 0; padding: 0 14px; border: solid #cbcdcf; border-width: 0 2px; }
      input { width: 0; flex: 1; padding: 0; border: 0; background: none; text-align: right; color: #9b9b9b; }
      .value span { color: #555; }
      .value .mm { font: 500 22px/24px "Noto Sans CJK KR", sans-serif; color: #444; }
    `;
  }
  render() {
    const label = this.getAttribute("label");
    const unit = this.getAttribute("unit");
    return `
      <div class="head"><label for="value">${label}</label>
        <button type="button" class="reset" aria-label="Reset ${label}" disabled>${icon("undo", 28)}</button></div>
      <div class="row">
        <dart-select disabled label="${label} preset" value="${this.getAttribute("preset")}"></dart-select>
        <div class="stepper">
          <button type="button" aria-label="Decrease" disabled>${icon("minus", 24)}</button>
          <div class="value"><input id="value" type="text" value="${this.getAttribute("value")}" disabled><span class="${unit === "㎜" ? "mm" : ""}">${unit}</span></div>
          <button type="button" aria-label="Increase" disabled>${icon("plus", 24)}</button>
        </div>
      </div>
    `;
  }
}

class JogSheet extends DartElement {
  styles() {
    return `
      :host {
        display: grid;
        grid-template-columns: 1188fr 1140fr;
        gap: 48px;
        flex: none;
        position: relative;
        padding: 32px 48px 22px;
        border-radius: 32px 32px 0 0;
        background: #fff;
        box-shadow: 0 0 48px rgba(0, 0, 0, .18);
      }
      .use { display: flex; align-items: center; gap: 12px; height: 40px; margin: 2px 0 12px; font-weight: 700; }
      .use input { appearance: none; width: 80px; height: 40px; padding: 6px; border-radius: 20px; background: #cbcbcb; }
      .use input::before { content: ""; display: block; width: 28px; height: 28px; border-radius: 50%; background: #fff; }
      .fields { display: grid; grid-template-columns: 1fr 1fr; gap: 32px; }
      .jog { display: grid; grid-template-columns: 1fr 1fr; gap: 48px; }
      .jog button {
        display: grid;
        place-items: center;
        height: 196px;
        padding-top: 12px;
        border: 0;
        border-bottom: 12px solid currentColor;
        border-radius: 8px;
        background: #fff;
        box-shadow: 0 0 20px rgba(0, 0, 0, .14);
      }
    `;
  }
  render() {
    return `
      <div>
        <label class="use">Use Increment<input type="checkbox" role="switch"></label>
        <div class="fields">
          <increment-field label="Angle Increment" preset="1" value="10.00" unit="°"></increment-field>
          <increment-field label="Position Increment" preset="10" value="100.00" unit="㎜"></increment-field>
        </div>
      </div>
      <div class="jog">
        <button type="button" aria-label="Jog minus" style="color: #be3a2b">${icon("bigMinus", 60)}</button>
        <button type="button" aria-label="Jog plus" style="color: #5bb264">${icon("bigPlus", 60)}</button>
      </div>
    `;
  }
}

class DockBar extends DartElement {
  styles() {
    return `
      :host {
        display: flex;
        justify-content: space-between;
        align-items: center;
        flex: none;
        position: relative;
        height: 96px;
        padding: 2px 16px 0;
        border-top: 2px solid var(--bar);
        background: var(--bar);
        box-shadow: inset 0 2px 0 var(--glass);
        color: #fff;
      }
      div, nav { display: flex; align-items: center; }
      .toggle {
        display: flex;
        justify-content: flex-end;
        width: 144px;
        height: 72px;
        padding: 2px 2px 4px;
        border: 0;
        border-radius: 20px;
        background: #616eef;
        box-shadow: inset 0 2px 4px rgba(0, 0, 0, .25), inset 0 -2px 0 #8d93f2;
        color: var(--ink);
      }
      .toggle span { display: grid; place-items: center; width: 92px; height: 66px; border-radius: 16px; background: #fff; box-shadow: 0 2px 3px rgba(0, 0, 0, .25); }
      .toggle.virtual { width: 196px; }
      .virtual span { width: 140px; }
      .glass { display: flex; align-items: center; justify-content: center; height: 72px; border: 2px solid var(--glass); border-radius: 16px; background: none; color: #fff; box-shadow: 0 4px 6px rgba(0, 0, 0, .25); }
      .servo { gap: 8px; }
      .pair { margin: 0 52px 0 56px; width: 176px; }
      .pair button { display: grid; place-items: center; flex: 1; height: 68px; border: 0; background: none; color: #fff; }
      .pair button + button { border-left: 3px solid var(--glass); }
      nav { gap: 32px; }
      nav a { display: flex; border-radius: 20px; background: linear-gradient(135deg, var(--a), var(--b)); color: #fff; }
      nav button { display: flex; border: 0; background: none; color: #fff; }
      .right { gap: 16px; }
      .quick { width: 262px; gap: 14px; margin-right: 24px; font-size: 26px; }
      .run { width: 96px; }
      .off { margin-right: 24px; border-color: rgba(255, 255, 255, .1); background: #5d6081; color: #75789a; box-shadow: none; }
      .speed { width: 260px; gap: 6px; }
      .speed b { font-size: 38px; font-weight: 400; }
      .speed small { font-size: 24px; margin: 12px 0 0 -4px; }
    `;
  }
  render() {
    const apps = [
      ["Home", "house", "#fff", "#fff"],
      ["Robot Parameters", "robotApp", "#6b9af8", "#2457d2"],
      ["Task Editor", "script", "#6dd0f0", "#3575de"],
      ["Jog Plus", "jog", "#9a66df", "#3d06f8"],
      ["Monitoring", "monitor", "#74eaa4", "#3c8fc6"],
      ["Log", "log", "#ecd842", "#e38f35"],
      ["Settings", "gear", "#999", "#7b7b7b"],
      ["Remote Control", "remote", "#9dacfb", "#4c68dc"],
    ];
    return `
      <div>
        <div class="servo"><span>Servo</span><button type="button" class="toggle" role="switch" aria-checked="true" aria-label="Servo"><span>On</span></button></div>
        <div class="glass pair">
          <button type="button" aria-label="Maintenance">${icon("wrench", 34)}</button>
          <button type="button" aria-label="Recovery">${icon("recover", 36)}</button>
        </div>
        <nav>
          ${apps.map(([name, glyph, a, b]) => `<a href="#${glyph}" aria-label="${name}" style="--a:${a};--b:${b}">${icon(glyph, 72)}</a>`).join("")}
          <button type="button" aria-label="More apps">${icon("up", 24)}</button>
        </nav>
      </div>
      <div class="right">
        <button type="button" class="toggle virtual" role="switch" aria-checked="true"><span>Virtual</span></button>
        <button type="button" class="glass quick">${icon("shapes", 36)}Quick Control</button>
        <button type="button" class="glass run" aria-label="Run">${icon("play", 36)}</button>
        <button type="button" class="glass run off" aria-label="Stop" disabled>${icon("stop", 32)}</button>
        <button type="button" class="glass speed">${icon("gauge", 42)}Speed <b>100</b><small>%</small></button>
      </div>
    `;
  }
}

const ELEMENTS = {
  "ui-icon": UiIcon,
  "dart-select": DartSelect,
  "force-table": ForceTable,
  "axis-group": AxisGroup,
  "increment-field": IncrementField,
  "title-bar": TitleBar,
  "status-bar": StatusBar,
  "module-tabs": ModuleTabs,
  "jog-nav": JogNav,
  "jog-workspace": JogWorkspace,
  "hand-switch": HandSwitch,
  "robot-view": RobotView,
  "jog-panel": JogPanel,
  "jog-sheet": JogSheet,
  "dock-bar": DockBar,
  "dart-window": DartWindow,
};

for (const [tag, type] of Object.entries(ELEMENTS)) {
  if (!customElements.get(tag)) customElements.define(tag, type);
}
</script>
</body>
</html>
